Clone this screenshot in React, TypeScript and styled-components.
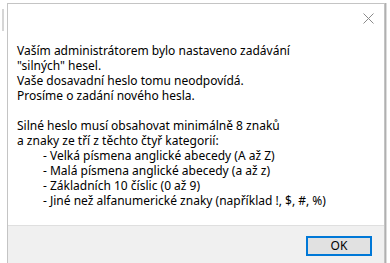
import React from 'react';
import styled, { createGlobalStyle } from 'styled-components';

const GlobalStyle = createGlobalStyle`
    html, body {
        margin: 0;
        padding: 0;
        background: #ffffff;
        overflow: hidden;
    }
    body {
        font-family: "Noto Sans", "Open Sans", sans-serif;
    }
`;

const Screen = styled.div`
    display: flex;
    width: 390px;
    height: 263px;
    overflow: hidden;
`;

const Gutter = styled.div`
    width: 7px;
    flex-shrink: 0;
    display: flex;
    flex-direction: column;
    align-items: center;
    padding-top: 9px;
    box-sizing: border-box;
`;

const GutterMark = styled.div`
    width: 2px;
    height: 22px;
    margin-left: -1px;
    background: #d6d6d6;
`;

const Window = styled.div`
    margin-top: 3px;
    width: 378px;
    height: 270px;
    display: flex;
    flex-direction: column;
    border: 1px solid #c4c4c4;
    border-bottom: none;
    box-shadow: 1px 0 0 #b0b0b0, 2px 0 0 #dcdcdc;
    background: #ffffff;
    box-sizing: border-box;
`;

const TitleBar = styled.div`
    height: 28px;
    display: flex;
    justify-content: flex-end;
    align-items: center;
    padding-right: 10px;
`;

const CloseButton = styled.div`
    width: 12px;
    height: 12px;
    display: flex;
    align-items: center;
    justify-content: center;
`;

const Body = styled.div`
    flex: 1;
    padding: 11px 0 0 9px;
    font-size: 12px;
    line-height: 15px;
    color: #000000;
`;

const Line = styled.div<{ $indent?: boolean }>`
    padding-left: ${(p) => (p.$indent ? '26px' : '0')};
    white-space: pre;
`;

const Spacer = styled.div`
    height: 15px;
`;

const Footer = styled.div`
    height: 48px;
    flex-shrink: 0;
    background: #f0f0f0;
    border-top: 1px solid #dfdfdf;
    display: flex;
    justify-content: flex-end;
    align-items: flex-start;
    padding: 10px 12px 0 0;
    box-sizing: border-box;
`;

const OkButton = styled.button`
    width: 66px;
    height: 20px;
    box-sizing: border-box;
    border: 2px solid #0078d7;
    background: #e1e1e1;
    font-family: "Noto Sans", "Open Sans", sans-serif;
    font-size: 12px;
    line-height: 14px;
    color: #000000;
    padding: 0;
`;

export default function App() {
    return (
        <>
            <GlobalStyle />
            <Screen>
                <Gutter>
                    <GutterMark />
                </Gutter>
                <Window>
                    <TitleBar>
                        <CloseButton>
                            <svg width="11" height="11" viewBox="0 0 11 11">
                                <path d="M0.5 0.5 L10.5 10.5 M10.5 0.5 L0.5 10.5" stroke="#8a8a8a" strokeWidth="1" fill="none" />
                            </svg>
                        </CloseButton>
                    </TitleBar>
                    <Body>
                        <Line>Vaším administrátorem bylo nastaveno zadávání</Line>
                        <Line>"silných" hesel.</Line>
                        <Line>Vaše dosavadní heslo tomu neodpovídá.</Line>
                        <Line>Prosíme o zadání nového hesla.</Line>
                        <Spacer />
                        <Line>Silné heslo musí obsahovat minimálně 8 znaků</Line>
                        <Line>a znaky ze tří z těchto čtyř kategorií:</Line>
                        <Line $indent>- Velká písmena anglické abecedy (A až Z)</Line>
                        <Line $indent>- Malá písmena anglické abecedy (a až z)</Line>
                        <Line $indent>- Základních 10 číslic (0 až 9)</Line>
                        <Line $indent>- Jiné než alfanumerické znaky (například !, $, #, %)</Line>
                    </Body>
                    <Footer>
                        <OkButton>OK</OkButton>
                    </Footer>
                </Window>
            </Screen>
        </>
    );
}
